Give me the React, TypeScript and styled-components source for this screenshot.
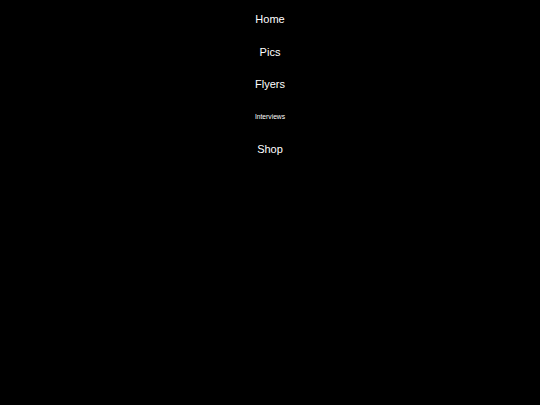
import React from "react";
import styled, { createGlobalStyle } from "styled-components";

const Global = createGlobalStyle`
  html, body { margin: 0; padding: 0; background: #000; }
  body { font-family: "Liberation Sans", Arial, sans-serif; }
`;

const Nav = styled.nav`
  display: flex;
  flex-direction: column;
  align-items: center;
  padding-top: 3px;
  min-height: 405px;
  box-sizing: border-box;
  background: #000;
`;

const Item = styled.a<{ $small?: boolean }>`
  display: flex;
  align-items: center;
  justify-content: center;
  height: 32.5px;
  color: #fff;
  text-decoration: none;
  font-size: ${(p) => (p.$small ? "6.7px" : "11px")};
`;

const items = [
  { label: "Home" },
  { label: "Pics" },
  { label: "Flyers" },
  { label: "Interviews", small: true },
  { label: "Shop" },
];

export default function App() {
  return (
    <>
      <Global />
      <Nav>
        {items.map((i) => (
          <Item key={i.label} href="#" $small={i.small}>
            {i.label}
          </Item>
        ))}
      </Nav>
    </>
  );
}
